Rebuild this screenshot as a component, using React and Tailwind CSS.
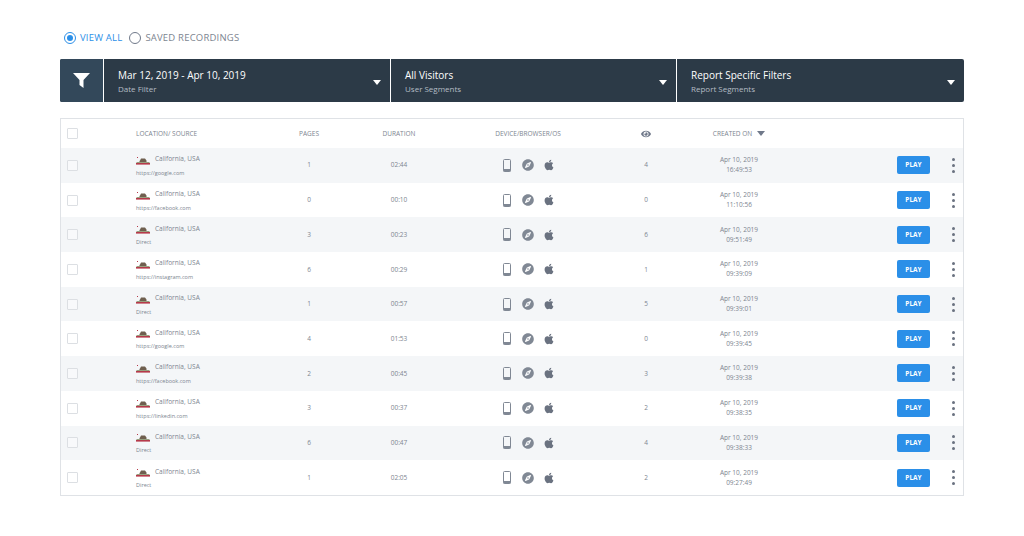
import { FaApple, FaCompass, FaEye } from "react-icons/fa";

const rows = [
  { source: "https://google.com", pages: 1, duration: "02:44", views: 4, time: "16:49:53" },
  { source: "https://facebook.com", pages: 0, duration: "00:10", views: 0, time: "11:10:56" },
  { source: "Direct", pages: 3, duration: "00:23", views: 6, time: "09:51:49" },
  { source: "https://instagram.com", pages: 6, duration: "00:29", views: 1, time: "09:39:09" },
  { source: "Direct", pages: 1, duration: "00:57", views: 5, time: "09:39:01" },
  { source: "https://google.com", pages: 4, duration: "01:53", views: 0, time: "09:39:45" },
  { source: "https://facebook.com", pages: 2, duration: "00:45", views: 3, time: "09:39:38" },
  { source: "https://linkedin.com", pages: 3, duration: "00:37", views: 2, time: "09:38:35" },
  { source: "Direct", pages: 6, duration: "00:47", views: 4, time: "09:38:33" },
  { source: "Direct", pages: 1, duration: "02:05", views: 2, time: "09:27:49" },
];

const filters = [
  { title: "Mar 12, 2019 - Apr 10, 2019", sub: "Date Filter", width: "w-[287px]" },
  { title: "All Visitors", sub: "User Segments", width: "w-[286px]" },
  { title: "Report Specific Filters", sub: "Report Segments", width: "flex-1" },
];

const cols = "grid grid-cols-[75px_143px_60px_120px_138px_98px_88px_114px_33px_1fr] items-center";

function Flag() {
  return (
    <svg width="14" height="11" viewBox="0 0 14 11" className="shrink-0">
      <path d="M4 6.5 L5 4.5 H9 L10.5 6.5 V8 H3.5 V7 Z" fill="#6f5f4f" />
      <path d="M0.5 8.5 H13.5" stroke="#7e8a5f" strokeWidth="0.8" />
      <rect x="0" y="9" width="14" height="1.6" fill="#b5394a" />
      <rect x="1" y="3" width="1" height="1" fill="#b5394a" />
    </svg>
  );
}

function Phone() {
  return (
    <svg width="8" height="13" viewBox="0 0 8 13">
      <rect x="0.5" y="0.5" width="7" height="12" rx="1" fill="none" stroke="#808894" strokeWidth="1" />
      <rect x="0.5" y="10" width="7" height="2.5" fill="#808894" />
    </svg>
  );
}

function Funnel() {
  return (
    <svg width="17" height="15" viewBox="0 0 17 15">
      <path d="M0 0 H17 L10.5 7 V15 L6.5 12 V7 Z" fill="white" />
    </svg>
  );
}

function Filter({ title, sub, width }) {
  return (
    <div className={`${width} relative flex flex-col justify-center pl-[14px] border-r border-white last:border-r-0`}>
      <div className="text-[10px] leading-[15px] font-medium text-white">{title}</div>
      <div className="text-[8px] leading-[11px] text-[#b4bcc4]">{sub}</div>
      <div className="absolute right-[9px] top-[21px] w-0 h-0 border-x-[4px] border-x-transparent border-t-[5px] border-t-white" />
    </div>
  );
}

function Checkbox() {
  return <div className="w-[11px] h-[11px] ml-[6px] border border-[#dcdfe3] bg-white/40 rounded-[1px]" />;
}

function Row({ row, index }) {
  return (
    <div className={`${cols} h-[34.7px] ${index % 2 === 0 ? "bg-[#f4f6f8]" : "bg-white"} text-[6.5px] text-[#7d8590] text-center`}>
      <Checkbox />
      <div className="text-left">
        <div className="flex items-center gap-[5px] text-[6.5px] leading-[10px]">
          <Flag />
          <span>California, USA</span>
        </div>
        <div className="mt-[4px] text-[5.5px] leading-[8px] font-medium text-[#7d8590]">{row.source}</div>
      </div>
      <div>{row.pages}</div>
      <div>{row.duration}</div>
      <div className="flex items-center justify-center pl-[2px]">
        <Phone />
        <FaCompass className="ml-[11px] text-[#808894] text-[12px]" />
        <FaApple className="ml-[9px] text-[#6a7280] text-[12px]" />
      </div>
      <div>{row.views}</div>
      <div className="leading-[10px]">
        <div>Apr 10, 2019</div>
        <div>{row.time}</div>
      </div>
      <div />
      <button className="h-[18px] w-[33px] rounded-[2px] bg-[#2b8fe8] text-white text-[6.5px] font-bold">PLAY</button>
      <div className="flex flex-col items-center gap-[3px] w-fit ml-[22px]">
        <div className="w-[3px] h-[3px] rounded-full bg-[#6a7280]" />
        <div className="w-[3px] h-[3px] rounded-full bg-[#6a7280]" />
        <div className="w-[3px] h-[3px] rounded-full bg-[#6a7280]" />
      </div>
    </div>
  );
}

export default function App() {
  return (
    <div className="w-[1024px] h-[536px] bg-white px-[60px] pt-[31px] font-['Open_Sans',sans-serif] overflow-hidden">
      <div className="flex items-center h-[14px] text-[9.5px] font-medium">
        <div className="w-[12px] h-[12px] ml-[4px] rounded-full border border-[#2b8fe8] flex items-center justify-center">
          <div className="w-[6px] h-[6px] rounded-full bg-[#2b8fe8]" />
        </div>
        <span className="ml-[4px] text-[#2b8fe8] tracking-[0.2px]">VIEW ALL</span>
        <div className="w-[12px] h-[12px] ml-[7px] rounded-full border border-[#70798a]" />
        <span className="ml-[4px] text-[#7d8590] tracking-[0.2px]">SAVED RECORDINGS</span>
      </div>

      <div className="mt-[14px] h-[43px] flex bg-[#2c3a47] rounded-[2px]">
        <div className="w-[44px] flex items-center justify-center bg-[#33485a] border-r border-white rounded-l-[2px]">
          <Funnel />
        </div>
        {filters.map((f) => (
          <Filter key={f.sub} {...f} />
        ))}
      </div>

      <div className="mt-[16px] border border-[#dfe2e6]">
        <div className={`${cols} h-[29px] text-[6.5px] text-[#7d8590] text-center`}>
          <Checkbox />
          <div className="text-left">LOCATION/ SOURCE</div>
          <div>PAGES</div>
          <div>DURATION</div>
          <div>DEVICE/BROWSER/OS</div>
          <div className="flex justify-center">
            <FaEye className="text-[#70798a] text-[10px]" />
          </div>
          <div className="flex items-center justify-center gap-[5px]">
            <span>CREATED ON</span>
            <div className="w-0 h-0 border-x-[4px] border-x-transparent border-t-[5px] border-t-[#70798a]" />
          </div>
        </div>
        {rows.map((row, i) => (
          <Row key={i} row={row} index={i} />
        ))}
      </div>
    </div>
  );
}
